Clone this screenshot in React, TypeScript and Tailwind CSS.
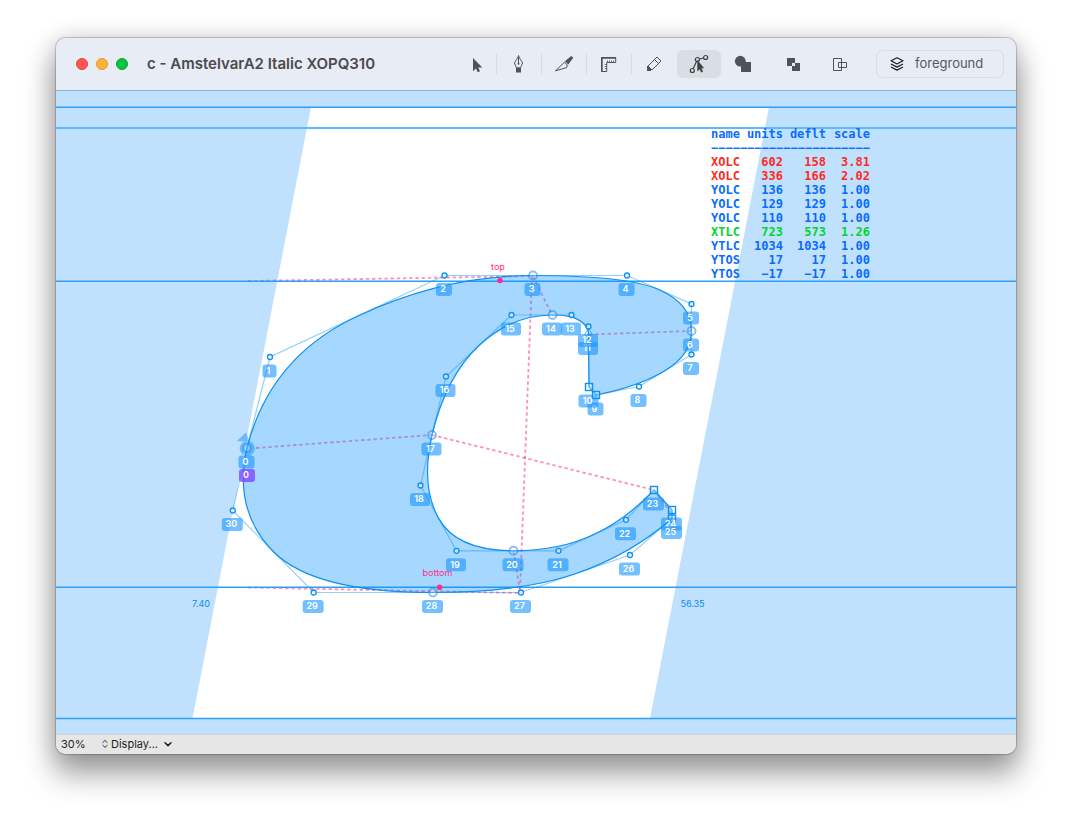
import React from "react";

type Kind = "off" | "smooth" | "corner";
type GlyphPoint = { x: number; y: number; kind: Kind };

const points: GlyphPoint[] = [
  { x: 247, y: 448, kind: "smooth" },
  { x: 270, y: 357, kind: "off" },
  { x: 444.5, y: 275.5, kind: "off" },
  { x: 533, y: 275.5, kind: "smooth" },
  { x: 627, y: 275.5, kind: "off" },
  { x: 691.5, y: 304, kind: "off" },
  { x: 691.5, y: 331, kind: "smooth" },
  { x: 691.5, y: 354.5, kind: "off" },
  { x: 639, y: 386.5, kind: "off" },
  { x: 596, y: 395, kind: "corner" },
  { x: 589, y: 387, kind: "corner" },
  { x: 588.5, y: 334.5, kind: "smooth" },
  { x: 588.5, y: 326.5, kind: "off" },
  { x: 571.5, y: 315, kind: "off" },
  { x: 552.5, y: 315, kind: "smooth" },
  { x: 511.5, y: 315, kind: "off" },
  { x: 446, y: 376.5, kind: "off" },
  { x: 432, y: 435, kind: "smooth" },
  { x: 420.5, y: 485.5, kind: "off" },
  { x: 456.5, y: 550.8, kind: "off" },
  { x: 513.5, y: 550.8, kind: "smooth" },
  { x: 558.5, y: 550.8, kind: "off" },
  { x: 626, y: 519.8, kind: "off" },
  { x: 654, y: 490, kind: "corner" },
  { x: 672, y: 510, kind: "corner" },
  { x: 672, y: 518.5, kind: "corner" },
  { x: 630, y: 555, kind: "off" },
  { x: 521, y: 592.5, kind: "off" },
  { x: 433, y: 592.5, kind: "smooth" },
  { x: 313.7, y: 592.5, kind: "off" },
  { x: 232.8, y: 510.5, kind: "off" },
];

// Quadratic outline: two neighbouring off-curve points imply an on-curve point half way.
function outline(pts: GlyphPoint[]): string {
  let d = `M${pts[0].x} ${pts[0].y}`;
  for (let i = 1; i <= pts.length; i++) {
    const p = pts[i % pts.length];
    if (p.kind !== "off") {
      if (pts[i - 1].kind !== "off") d += `L${p.x} ${p.y}`;
      continue;
    }
    const n = pts[(i + 1) % pts.length];
    const ex = n.kind === "off" ? (p.x + n.x) / 2 : n.x;
    const ey = n.kind === "off" ? (p.y + n.y) / 2 : n.y;
    d += `Q${p.x} ${p.y} ${ex} ${ey}`;
  }
  return d + "Z";
}

const measures: number[][] = [
  [248, 281, 533, 276],
  [248, 587.5, 521, 593],
  [256, 448, 432, 435],
  [432, 435, 654, 490],
  [532, 276, 520, 592],
  [533, 276, 552, 315],
  [589, 334.5, 691, 331],
  [513.5, 551, 520, 592],
  [654, 490, 672, 514],
];

function Label({ x, y, text, purple }: { x: number; y: number; text: string; purple?: boolean }) {
  const w = text === "1" ? 14 : text.length === 1 ? 16 : text[0] === "1" ? 20 : 21;
  return (
    <g>
      <rect x={x - w / 2} y={y} width={w} height={13} rx={3} fill={purple ? "#7c3cff" : "#1794ff"} fillOpacity={purple ? 0.75 : 0.6} />
      <text x={x - 1} y={y + 9.2} textAnchor="middle" fill="#fff" className="font-['Inter',sans-serif] text-[9px] font-semibold">
        {text}
      </text>
    </g>
  );
}

function Canvas() {
  const d = outline(points);
  return (
    <svg viewBox="56 91 960 643" className="block h-auto w-full bg-white" role="img" aria-label="Glyph outline of the letter c">
      <g stroke="#ff1f7d" strokeOpacity={0.5} strokeWidth={1.8} strokeDasharray="3.4 2.8">
        {measures.map((m, i) => (
          <line key={i} x1={m[0]} y1={m[1]} x2={m[2]} y2={m[3]} />
        ))}
      </g>
      <path d="M56 91H1016V734H56ZM311 107L192.5 718.5H650L769 107Z" fill="#0087fb" fillOpacity={0.25} fillRule="evenodd" />
      <path d="M56 107.3H1016M56 281.3H1016M56 587.3H1016M56 718.5H1016" stroke="#2f9ef8" strokeWidth={1.4} />
      <path d="M56 128H1016" stroke="#62b6fc" strokeWidth={2} />
      <path d={d} fill="#008eff" fillOpacity={0.35} stroke="#0c90f5" strokeWidth={1.2} />
      <path
        d={points.map((p, i) => `${i ? "L" : "M"}${p.x} ${p.y}`).join("") + "Z"}
        fill="none"
        stroke="#1592f5"
        strokeOpacity={0.45}
        strokeWidth={1.2}
      />
      <g fill="#1794ff" fillOpacity={0.5}>
        <path d="M236.5 441.2L246 432.5L249.5 441.2Z" />
        <circle cx={247.3} cy={448.3} r={7.6} />
      </g>
      <path d="M588.5 328L592.5 335H584.5Z" fill="none" stroke="#1592f5" strokeOpacity={0.6} />
      {points.map((p, i) => {
        if (i === 11) return null;
        if (p.kind === "corner")
          return <rect key={i} x={p.x - 3.5} y={p.y - 3.5} width={7} height={7} fill="#fff" fillOpacity={0.3} stroke="#0c90f5" strokeWidth={1.4} />;
        if (p.kind === "smooth")
          return <circle key={i} cx={p.x} cy={p.y} r={4} fill="#fff" fillOpacity={0.2} stroke="#1582e5" strokeOpacity={0.5} strokeWidth={1.9} />;
        return <circle key={i} cx={p.x} cy={p.y} r={2.5} fill="#fff" fillOpacity={0.5} stroke="#0c90f5" strokeWidth={1.3} />;
      })}
      {points.map((p, i) => (
        <Label key={i} x={p.x - 0.5} y={p.y + 7.5} text={String(i)} />
      ))}
      <Label x={247} y={469} text="0" purple />
      <g fill="#ff2d87">
        <circle cx={500} cy={280.5} r={2.8} />
        <circle cx={439.6} cy={587.2} r={2.8} />
      </g>
      <g className="font-['Inter',sans-serif] text-[9px]" textAnchor="middle">
        <text x={498} y={270} fill="#ff2d87">top</text>
        <text x={437.5} y={576} fill="#ff2d87">bottom</text>
        <text x={201} y={607} fill="#0c8af5">7.40</text>
        <text x={692.5} y={607} fill="#0c8af5">56.35</text>
      </g>
    </svg>
  );
}

const rows: [string, string, string, string, string][] = [
  ["XOLC", "602", "158", "3.81", "text-[#ff2a1f]"],
  ["XOLC", "336", "166", "2.02", "text-[#ff2a1f]"],
  ["YOLC", "136", "136", "1.00", ""],
  ["YOLC", "129", "129", "1.00", ""],
  ["YOLC", "110", "110", "1.00", ""],
  ["XTLC", "723", "573", "1.26", "text-[#00d62b]"],
  ["YTLC", "1034", "1034", "1.00", ""],
  ["YTOS", "17", "17", "1.00", ""],
  ["YTOS", "−17", "−17", "1.00", ""],
];

function Measurements() {
  return (
    <table className="absolute top-9 left-[655px] table-fixed border-collapse text-right font-['DejaVu_Sans_Mono',monospace] text-xs leading-[14px] font-bold whitespace-nowrap text-[#0a6cff]">
      <colgroup>
        <col className="w-[29px]" />
        <col className="w-[43px]" />
        <col className="w-[43px]" />
        <col className="w-[44px]" />
      </colgroup>
      <thead>
        <tr>
          <th scope="col" className="p-0 text-left">name</th>
          <th scope="col" className="p-0">units</th>
          <th scope="col" className="p-0">deflt</th>
          <th scope="col" className="p-0">scale</th>
        </tr>
        <tr aria-hidden="true">
          <td colSpan={4} className="p-0 text-left">−−−−−−−−−−−−−−−−−−−−−−</td>
        </tr>
      </thead>
      <tbody>
        {rows.map((r, i) => (
          <tr key={i} className={r[4]}>
            <td className="p-0 text-left">{r[0]}</td>
            <td className="p-0">{r[1]}</td>
            <td className="p-0">{r[2]}</td>
            <td className="p-0">{r[3]}</td>
          </tr>
        ))}
      </tbody>
    </table>
  );
}

function Tool({ label, active, children }: { label: string; active?: boolean; children: React.ReactNode }) {
  return (
    <button
      type="button"
      aria-label={label}
      aria-pressed={!!active}
      className={active ? "h-7 w-11 shrink-0 rounded-md bg-[#d9dde4]" : "h-7 w-11 shrink-0 rounded-md"}
    >
      <svg viewBox="0 0 44 28" className="block h-7 w-11" fill="none" stroke="#4d535a">
        {children}
      </svg>
    </button>
  );
}

const Divider = () => <span className="h-5 w-px shrink-0 bg-[#d6dae2]" />;

// Stair-stepped pencil outline, one unit per step.
const pencilSteps = [
  [24, 7], [25, 7], [23, 8], [26, 8], [22, 9], [27, 9], [21, 10], [23, 10], [28, 10], [20, 11], [24, 11], [28, 11],
  [19, 12], [25, 12], [27, 12], [18, 13], [26, 13], [17, 14], [25, 14], [16, 15], [24, 15], [23, 16], [22, 17], [21, 18],
];

function Toolbar() {
  return (
    <div className="ml-auto flex items-center">
      <Tool label="Select">
        <path d="M21 8V21.2L24 18.4L25.7 22.3L28 21.3L26.2 17.4H30.3Z" fill="#4d535a" stroke="none" />
      </Tool>
      <Divider />
      <Tool label="Pen">
        <path d="M21.5 5.5C20.8 8.5 18.5 10.6 17.4 13C18 15 19.2 16.2 19.4 17.8H23.6C23.8 16.2 25 15 25.6 13C24.5 10.6 22.2 8.5 21.5 5.5Z" />
        <path d="M21.5 7V13" />
        <circle cx={21.5} cy={13.7} r={1} fill="#4d535a" stroke="none" />
        <path d="M19 18H24V22.4H19Z" fill="#4d535a" stroke="none" />
      </Tool>
      <Divider />
      <Tool label="Knife">
        <path d="M13.5 20.8L22.5 12.2L25.3 15L24.6 17.7L13.5 20.8Z" />
        <path d="M22.8 11.3L29.2 6L31.3 7.7L26.3 14.5Z" fill="#4d535a" stroke="none" />
      </Tool>
      <Divider />
      <Tool label="Measure">
        <path d="M14.5 7.5H28.7V12.5H19.7V21.5H14.5Z" />
        <path d="M14 8H29M15 7.5V21.5" strokeWidth={1.4} />
        <path d="M20.5 12V10.5M22.5 12V10.5M24.5 12V10.5M26.5 12V10.5M19.5 14.5H17.8M19.5 16.5H17.8M19.5 18.5H17.8" strokeWidth={0.8} />
      </Tool>
      <Divider />
      <Tool label="Pencil">
        <g fill="#4d535a" stroke="none" shapeRendering="crispEdges">
          <path d={pencilSteps.map(([x, y]) => `M${x} ${y}h1v1h-1z`).join("")} />
          <path d="M15 16H17V17H18V18H19V19H20V20H19V21H15Z" />
          <path d="M20 19H21V20H20Z" />
        </g>
      </Tool>
      <span className="w-px shrink-0" />
      <Tool label="Edit nodes" active>
        <g stroke="#3c4146" strokeWidth={1.2}>
          <path d="M16.2 18.8L19.6 11.3M22.2 9L26.8 8" />
          <circle cx={15.3} cy={20.5} r={2} />
          <circle cx={20.4} cy={9.5} r={2} />
          <circle cx={28.6} cy={7.5} r={2} />
        </g>
        <path d="M20.3 10V21.5L22.6 19.3L24.2 22.6L26 21.8L24.5 18.3H27.2Z" fill="#3c4146" stroke="none" />
      </Tool>
      <Tool label="Union">
        <g fill="#4d535a" stroke="none">
          <circle cx={19.3} cy={11.2} r={5.4} />
          <path d="M20 12H30V22H20Z" />
        </g>
      </Tool>
      <span className="w-1.5 shrink-0" />
      <Tool label="Exclude">
        <path d="M16 8H24V13H29V21H21V16H16ZM21 13V16H24V13Z" fill="#4d535a" fillRule="evenodd" stroke="none" />
      </Tool>
      <span className="w-0.5 shrink-0" />
      <Tool label="Intersect">
        <path d="M16.5 8.5H24.5V20.5H16.5ZM21.5 12.5H29.5V17.5H21.5Z" />
      </Tool>
      <div className="mr-3 ml-[15px] flex h-7 w-32 items-center rounded-md border border-[#d9dde5] pl-3">
        <svg viewBox="0 0 16 16" className="mr-2.5 h-4 w-4 shrink-0" fill="none" stroke="#1d1f22" strokeWidth={1.2} strokeLinejoin="round">
          <path d="M8 1.7L14 4.8L8 8L2 4.8Z" />
          <path d="M2 8L8 11.1L14 8M2 11L8 14.1L14 11" />
        </svg>
        <select aria-label="Layer" className="w-20 appearance-none bg-transparent text-[13px] text-[#53585f]">
          <option>foreground</option>
          <option>background</option>
        </select>
      </div>
    </div>
  );
}

export default function App() {
  return (
    <main className="min-h-screen bg-white px-14 pt-[38px] pb-[74px] font-['Inter',sans-serif]">
      <section className="overflow-hidden rounded-[10px] shadow-[0_0_1px_1px_rgba(0,0,0,0.2),0_18px_30px_2px_rgba(0,0,0,0.38),0_0_24px_rgba(0,0,0,0.14)]">
        <header className="flex h-[53px] items-center border-b border-[#8db4d4] bg-[#e8ecf4]">
          <div className="ml-5 flex gap-2">
            <button type="button" aria-label="Close" className="h-3 w-3 rounded-full border border-[#e2443f] bg-[#ff5450]" />
            <button type="button" aria-label="Minimize" className="h-3 w-3 rounded-full border border-[#e09a2c] bg-[#ffb03a]" />
            <button type="button" aria-label="Zoom" className="h-3 w-3 rounded-full border border-[#04a838] bg-[#06c245]" />
          </div>
          <h1 className="ml-[19px] text-[15px] font-semibold whitespace-nowrap text-[#4a4b4e]">c - AmstelvarA2 Italic XOPQ310</h1>
          <Toolbar />
        </header>
        <div className="relative">
          <Canvas />
          <Measurements />
        </div>
        <footer className="flex h-5 items-center border-t border-[#cfd2d6] bg-[#e6e6e6] pb-0.5 pl-[5px] text-[11px] leading-4 text-[#1f1f1f]">
          <div className="flex items-center">
            <select aria-label="Zoom level" className="w-9 appearance-none bg-transparent">
              <option>30%</option>
              <option>100%</option>
            </select>
            <svg viewBox="0 0 8 10" className="ml-1 h-2.5 w-2" fill="none" stroke="#333" strokeLinecap="round" strokeLinejoin="round">
              <path d="M1.8 3.5L4 1.4L6.2 3.5M1.8 6.3L4 8.4L6.2 6.3" />
            </svg>
          </div>
          <button type="button" aria-haspopup="menu" className="ml-0.5 flex items-center gap-1.5">
            Display...
            <svg viewBox="0 0 8 8" className="h-2 w-2" fill="none" stroke="#222" strokeWidth={1.5} strokeLinecap="round" strokeLinejoin="round">
              <path d="M1 2.8L4 5.6L7 2.8" />
            </svg>
          </button>
        </footer>
      </section>
    </main>
  );
}
